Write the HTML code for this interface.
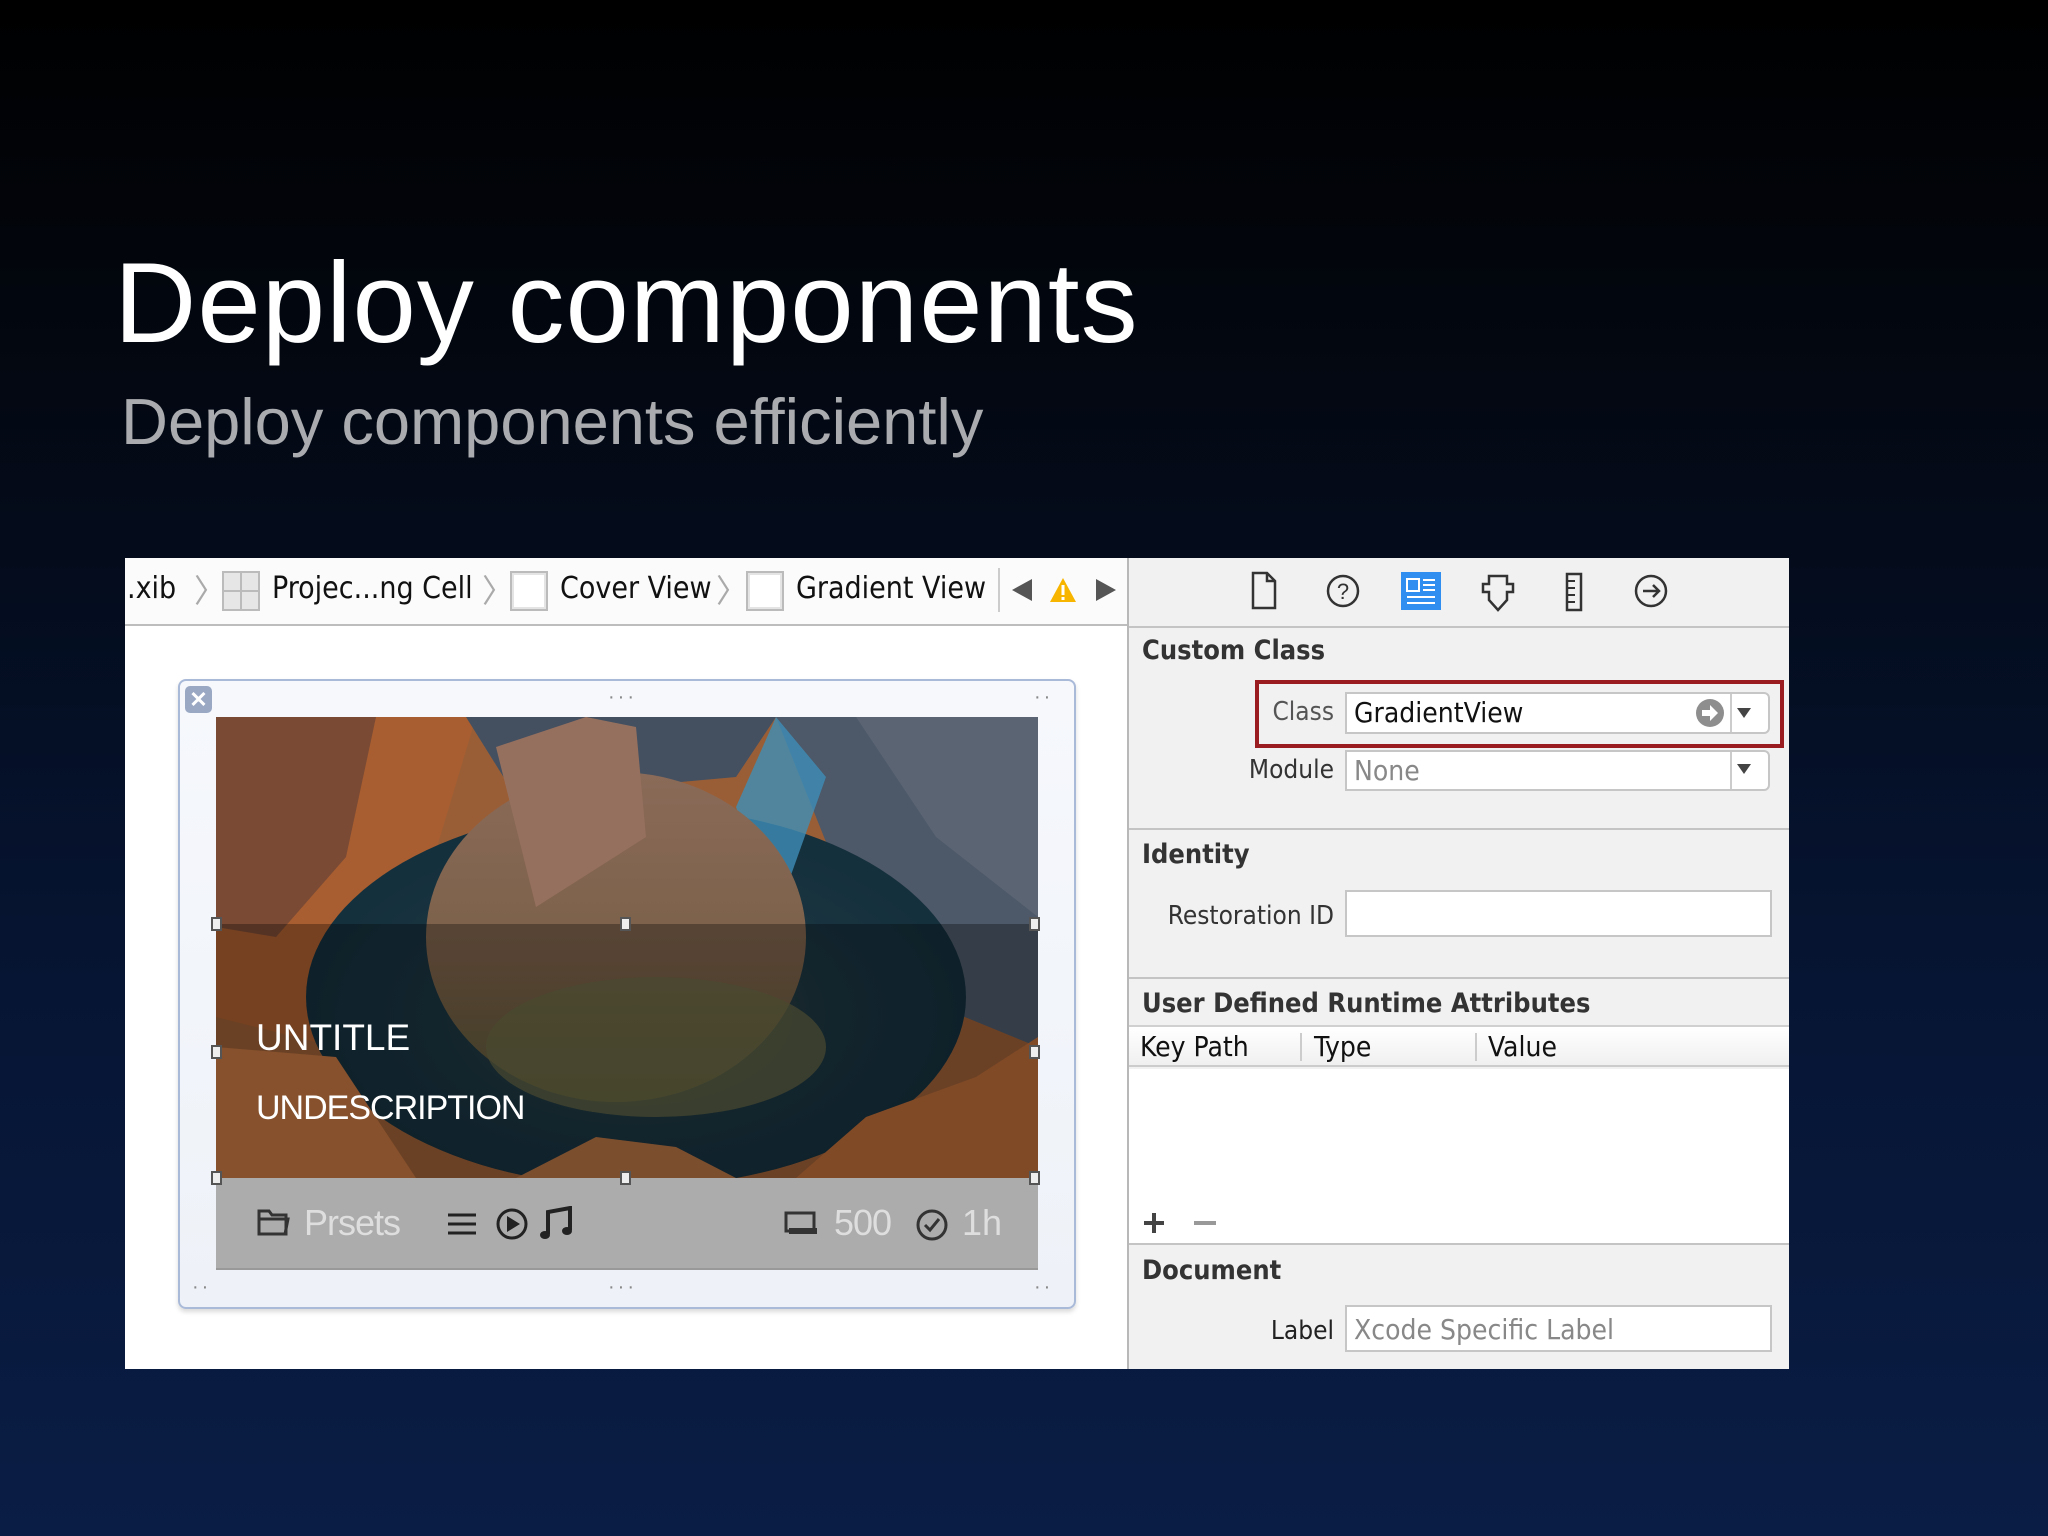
<!DOCTYPE html>
<html><head><meta charset="utf-8"><style>
*{margin:0;padding:0;box-sizing:border-box}
body{width:2048px;height:1536px;overflow:hidden;background:linear-gradient(180deg,#000 0%,#030812 25%,#061431 60%,#0a1d45 100%);font-family:"Liberation Sans",sans-serif;position:relative}
.abs{position:absolute}
h1{position:absolute;left:114px;top:238px;font-size:114px;font-weight:normal;color:#fff;letter-spacing:1px;white-space:nowrap}
h2{position:absolute;left:121px;top:384px;font-size:65px;font-weight:normal;color:#a9abae;white-space:nowrap}
.ui{font-family:"DejaVu Sans Condensed","Liberation Sans",sans-serif}
.t{position:absolute;white-space:nowrap}
.sep{position:absolute;height:2px;background:#c4c4c4}
.field{position:absolute;background:#fff;border:2px solid #c6c6c6}
.lbl{position:absolute;text-align:right;font-size:26px;color:#333;white-space:nowrap}
.hd{position:absolute;font-size:27px;font-weight:bold;color:#333;white-space:nowrap}
.h{position:absolute;width:11px;height:14px;background:#eee;border:2px solid #555}
.dots{position:absolute;color:#888;font-size:20px;letter-spacing:3px}
</style></head><body>
<h1>Deploy components</h1>
<h2>Deploy components efficiently</h2>

<div class="abs" style="left:125px;top:558px;width:1002px;height:811px;background:#fff"></div>
<div class="abs" style="left:125px;top:558px;width:1002px;height:68px;background:#fbfbfb;border-bottom:2px solid #bdbdbd"></div>
<div class="ui t" style="left:127px;top:571px;font-size:30px;color:#111">.xib</div>
<div class="ui t" style="left:194px;top:566px;font-size:32px;color:#aaa">〉</div>
<div class="abs" style="left:222px;top:571px;width:38px;height:40px;border:2px solid #bbb;background:#e6e6e6"><div style="position:absolute;left:16px;top:0;width:2px;height:36px;background:#bbb"></div><div style="position:absolute;left:0;top:17px;width:34px;height:2px;background:#bbb"></div></div>
<div class="ui t" style="left:272px;top:571px;font-size:30px;color:#111">Projec...ng Cell</div>
<div class="ui t" style="left:482px;top:566px;font-size:32px;color:#aaa">〉</div>
<div class="abs" style="left:510px;top:571px;width:38px;height:40px;border:2px solid #bbb;background:#fff;box-shadow:inset 0 0 0 2px #e4e4e4"></div>
<div class="ui t" style="left:560px;top:571px;font-size:30px;color:#111">Cover View</div>
<div class="ui t" style="left:716px;top:566px;font-size:32px;color:#aaa">〉</div>
<div class="abs" style="left:746px;top:571px;width:38px;height:40px;border:2px solid #bbb;background:#fff;box-shadow:inset 0 0 0 2px #e4e4e4"></div>
<div class="ui t" style="left:796px;top:571px;font-size:30px;color:#111">Gradient View</div>
<div class="abs" style="left:998px;top:568px;width:2px;height:44px;background:#ccc"></div>
<svg class="abs" style="left:1010px;top:575px" width="110" height="30"><path d="M2 15 L22 4 L22 26Z" fill="#555"/><path d="M40 27 L53 3 L66 27Z" fill="#f7b500"/><rect x="51.5" y="10" width="3" height="10" fill="#fff"/><rect x="51.5" y="22" width="3" height="3" fill="#fff"/><path d="M86 4 L106 15 L86 26Z" fill="#555"/></svg>

<div class="abs" style="left:178px;top:679px;width:898px;height:630px;border:2px solid #a9b9d8;border-radius:8px;background:linear-gradient(#f6f8fc,#eef2f8);box-shadow:0 3px 5px rgba(0,0,0,.15)"></div>
<div class="abs" style="left:185px;top:686px;width:27px;height:27px;border-radius:5px;background:#9aa8c4;color:#fff;font-size:22px;font-weight:bold;text-align:center;line-height:27px">✕</div>
<div class="dots" style="left:608px;top:686px">···</div>
<div class="dots" style="left:1034px;top:686px">··</div>
<div class="dots" style="left:608px;top:1276px">···</div>
<div class="dots" style="left:192px;top:1276px">··</div>
<div class="dots" style="left:1034px;top:1276px">··</div>

<svg class="abs" style="left:216px;top:717px" width="822" height="461" viewBox="0 0 822 461">
<defs>
<radialGradient id="w" cx=".5" cy=".55" r=".5"><stop offset="0" stop-color="#3a4a3a"/><stop offset=".6" stop-color="#1b3440"/><stop offset="1" stop-color="#15303d"/></radialGradient>
<linearGradient id="r" x1="0" y1="0" x2="0" y2="1"><stop offset="0" stop-color="#8a6a58"/><stop offset=".6" stop-color="#7a6048"/><stop offset="1" stop-color="#5b5a38"/></linearGradient>
</defs>
<rect width="822" height="461" fill="#9a5e36"/>
<path d="M0 0 H260 L200 200 L120 330 L0 300Z" fill="#a85e30"/>
<path d="M0 0 H160 L130 140 L60 220 L0 210Z" fill="#7a4a34"/>
<path d="M560 0 H822 V330 L700 280 L620 150Z" fill="#4d5868"/>
<path d="M640 0 H822 V200 L720 120Z" fill="#5a6472"/>
<path d="M250 0 H560 L520 60 L300 80Z" fill="#445060"/>
<ellipse cx="420" cy="280" rx="330" ry="190" fill="url(#w)"/>
<path d="M560 0 L520 90 L560 200 L610 60Z" fill="#3e8fb8" opacity=".8"/>
<ellipse cx="400" cy="220" rx="190" ry="165" fill="url(#r)"/>
<path d="M280 30 L370 0 L420 10 L430 120 L320 190Z" fill="#96705e"/>
<ellipse cx="440" cy="330" rx="170" ry="70" fill="#6a6a45" opacity=".7"/>
<path d="M0 330 L120 340 L200 461 H0Z" fill="#c07440"/>
<path d="M822 320 V461 H580 L650 400 L760 360Z" fill="#b86a38"/>
<path d="M300 461 L380 420 L460 430 L520 461Z" fill="#b07042"/>
<rect y="207" width="822" height="254" fill="#000" opacity=".3"/>
</svg>
<div class="t" style="left:256px;top:1017px;font-size:37px;color:#fff">UNTITLE</div>
<div class="t" style="left:256px;top:1089px;font-size:34px;color:#fff;letter-spacing:-1px">UNDESCRIPTION</div>
<div class="abs" style="left:216px;top:1178px;width:822px;height:92px;background:#acacac;border-bottom:2px solid #999"></div>
<svg class="abs" style="left:256px;top:1207px" width="36" height="30"><path d="M3 4 H13 L16 8 H30 V27 H3Z M3 12 H32 L29 27" fill="none" stroke="#333" stroke-width="3"/></svg>
<div class="t" style="left:304px;top:1202px;font-size:36px;color:#dedede;letter-spacing:-1px">Prsets</div>
<svg class="abs" style="left:446px;top:1206px" width="130" height="36"><path d="M2 9 H30 M2 18 H30 M2 27 H30" stroke="#222" stroke-width="3"/><circle cx="66" cy="18" r="14" fill="none" stroke="#222" stroke-width="3"/><path d="M61 10 L74 18 L61 26Z" fill="#222"/><path d="M102 28 V6 L124 2 V24" fill="none" stroke="#222" stroke-width="4"/><ellipse cx="99" cy="29" rx="5" ry="4" fill="#222"/><ellipse cx="121" cy="25" rx="5" ry="4" fill="#222"/></svg>
<svg class="abs" style="left:783px;top:1210px" width="36" height="28"><rect x="3" y="3" width="28" height="18" fill="none" stroke="#333" stroke-width="3"/><rect x="6" y="18" width="28" height="6" fill="#333"/></svg>
<div class="t" style="left:834px;top:1202px;font-size:36px;color:#dedede;letter-spacing:-1px">500</div>
<svg class="abs" style="left:914px;top:1207px" width="36" height="36"><circle cx="18" cy="18" r="14" fill="none" stroke="#333" stroke-width="3"/><path d="M11 18 L16 23 L25 12" fill="none" stroke="#333" stroke-width="3"/></svg>
<div class="t" style="left:962px;top:1202px;font-size:36px;color:#dedede">1h</div>
<div class="h" style="left:211px;top:917px"></div><div class="h" style="left:620px;top:917px"></div><div class="h" style="left:1029px;top:917px"></div>
<div class="h" style="left:211px;top:1045px"></div><div class="h" style="left:1029px;top:1045px"></div>
<div class="h" style="left:211px;top:1171px"></div><div class="h" style="left:620px;top:1171px"></div><div class="h" style="left:1029px;top:1171px"></div>

<div class="abs ui" style="left:1127px;top:558px;width:662px;height:811px;background:#f1f1f2;border-left:2px solid #b8b8b8"></div>
<div class="sep" style="left:1129px;top:626px;width:660px"></div>
<svg class="abs" style="left:1245px;top:570px" width="440" height="42">
<path d="M8 3 H22 L30 11 V38 H8Z M22 3 V11 H30" fill="none" stroke="#333" stroke-width="2.5"/>
<circle cx="98" cy="21" r="15" fill="none" stroke="#333" stroke-width="2.5"/><text x="98" y="29" font-size="22" text-anchor="middle" fill="#333" font-family="Liberation Sans">?</text>
<rect x="156" y="2" width="40" height="38" fill="#2f8ef0"/><rect x="162" y="9" width="12" height="12" fill="none" stroke="#fff" stroke-width="2"/><path d="M178 10 H190 M178 15 H190 M178 20 H190 M162 27 H190 M162 33 H190" stroke="#fff" stroke-width="2"/>
<path d="M244 6 H262 V14 H268 V22 H262 V30 L253 40 L244 30 V22 H238 V14 H244Z" fill="none" stroke="#333" stroke-width="2.5"/>
<rect x="322" y="4" width="14" height="36" fill="none" stroke="#333" stroke-width="2.5"/><path d="M322 11 H330 M322 18 H330 M322 25 H330 M322 32 H330" stroke="#333" stroke-width="2"/>
<circle cx="406" cy="21" r="15" fill="none" stroke="#333" stroke-width="2.5"/><path d="M398 21 H414 M408 15 L414 21 L408 27" fill="none" stroke="#333" stroke-width="2.5"/>
</svg>

<div class="hd ui" style="left:1142px;top:635px">Custom Class</div>
<div class="abs" style="left:1255px;top:680px;width:529px;height:68px;border:4px solid #9b1c20"></div>
<div class="lbl ui" style="left:1230px;width:104px;top:697px;color:#555">Class</div>
<div class="field" style="left:1345px;top:692px;width:425px;height:42px;border-radius:0 6px 6px 0"></div>
<div class="abs" style="left:1730px;top:694px;width:2px;height:38px;background:#ccc"></div>
<div class="t ui" style="left:1354px;top:696px;font-size:28px;color:#111">GradientView</div>
<svg class="abs" style="left:1694px;top:697px" width="70" height="32"><circle cx="16" cy="16" r="14" fill="#8e8e8e"/><path d="M8 13 H16 V8 L24 16 L16 24 V19 H8Z" fill="#fff"/><path d="M43 11 H57 L50 21Z" fill="#444"/></svg>
<div class="lbl ui" style="left:1200px;width:134px;top:755px">Module</div>
<div class="field" style="left:1345px;top:750px;width:425px;height:41px;border-radius:0 6px 6px 0"></div>
<div class="abs" style="left:1730px;top:752px;width:2px;height:37px;background:#ccc"></div>
<div class="t ui" style="left:1354px;top:754px;font-size:28px;color:#888">None</div>
<svg class="abs" style="left:1730px;top:758px" width="40" height="24"><path d="M7 6 H21 L14 16Z" fill="#444"/></svg>

<div class="sep" style="left:1129px;top:828px;width:660px"></div>
<div class="hd ui" style="left:1142px;top:839px">Identity</div>
<div class="lbl ui" style="left:1130px;width:204px;top:901px">Restoration ID</div>
<div class="field" style="left:1345px;top:890px;width:427px;height:47px"></div>

<div class="sep" style="left:1129px;top:977px;width:660px"></div>
<div class="hd ui" style="left:1142px;top:988px">User Defined Runtime Attributes</div>
<div class="sep" style="left:1129px;top:1025px;width:660px;background:#d0d0d0"></div>
<div class="abs" style="left:1129px;top:1027px;width:660px;height:40px;background:linear-gradient(#fff,#f0f0f0);border-bottom:2px solid #ccc"></div>
<div class="t ui" style="left:1140px;top:1030px;font-size:28px;color:#111">Key Path</div>
<div class="abs" style="left:1300px;top:1033px;width:2px;height:28px;background:#ccc"></div>
<div class="t ui" style="left:1314px;top:1030px;font-size:28px;color:#111">Type</div>
<div class="abs" style="left:1475px;top:1033px;width:2px;height:28px;background:#ccc"></div>
<div class="t ui" style="left:1488px;top:1030px;font-size:28px;color:#111">Value</div>
<div class="abs" style="left:1129px;top:1069px;width:660px;height:174px;background:#fff"></div>
<svg class="abs" style="left:1142px;top:1210px" width="80" height="26"><path d="M12 3 V23 M2 13 H22" stroke="#444" stroke-width="4"/><path d="M52 13 H74" stroke="#999" stroke-width="4"/></svg>
<div class="sep" style="left:1129px;top:1243px;width:660px"></div>
<div class="hd ui" style="left:1142px;top:1255px">Document</div>
<div class="lbl ui" style="left:1200px;width:134px;top:1316px;color:#222">Label</div>
<div class="field" style="left:1345px;top:1305px;width:427px;height:47px"></div>
<div class="t ui" style="left:1354px;top:1313px;font-size:28px;color:#888">Xcode Specific Label</div>
</body></html>
